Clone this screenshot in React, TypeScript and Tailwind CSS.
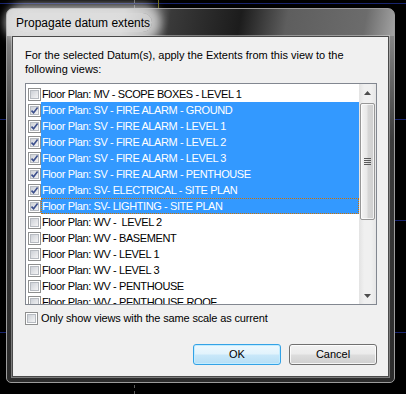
import React from "react";

type Row = { label: string; checked?: boolean; selected?: boolean; focus?: boolean };

const rows: Row[] = [
  { label: "Floor Plan: MV - SCOPE BOXES - LEVEL 1" },
  { label: "Floor Plan: SV - FIRE ALARM - GROUND", checked: true, selected: true },
  { label: "Floor Plan: SV - FIRE ALARM - LEVEL 1", checked: true, selected: true },
  { label: "Floor Plan: SV - FIRE ALARM - LEVEL 2", checked: true, selected: true },
  { label: "Floor Plan: SV - FIRE ALARM - LEVEL 3", checked: true, selected: true },
  { label: "Floor Plan: SV - FIRE ALARM - PENTHOUSE", checked: true, selected: true },
  { label: "Floor Plan: SV- ELECTRICAL - SITE PLAN", checked: true, selected: true },
  { label: "Floor Plan: SV- LIGHTING - SITE PLAN", checked: true, selected: true, focus: true },
  { label: "Floor Plan: WV -  LEVEL 2" },
  { label: "Floor Plan: WV - BASEMENT" },
  { label: "Floor Plan: WV - LEVEL 1" },
  { label: "Floor Plan: WV - LEVEL 3" },
  { label: "Floor Plan: WV - PENTHOUSE" },
  { label: "Floor Plan: WV - PENTHOUSE ROOF" },
];

function CheckBox({ checked }: { checked?: boolean }) {
  return (
    <div className="w-[13px] h-[13px] shrink-0 border border-[#8e8f8f] bg-white p-px">
      <div className="relative w-full h-full border border-[#b7bbc1] bg-[linear-gradient(135deg,#cdd1d7,#f4f4f5)]">
        {checked && (
          <svg viewBox="0 0 9 9" className="absolute -left-px -top-px w-[9px] h-[9px]">
            <path d="M1.5 4.6 L3.6 6.8 L7.6 1.6" fill="none" stroke="#3c4f8c" strokeWidth="1.6" />
          </svg>
        )}
      </div>
    </div>
  );
}

function Arrow({ down }: { down?: boolean }) {
  return (
    <div className="h-[17px] flex items-center justify-center">
      <svg viewBox="0 0 7 4" className="w-[7px] h-[4px]">
        <path d={down ? "M0 0 H7 L3.5 4 Z" : "M0 4 H7 L3.5 0 Z"} fill="#4d4d4d" />
      </svg>
    </div>
  );
}

export default function App() {
  return (
    <div className="relative w-[406px] h-[394px] overflow-hidden bg-black pl-[6px] pt-[8px] font-['Liberation_Sans',Arial,sans-serif] text-[11px] text-black">
      {/* cad drawing behind the dialog */}
      <div className="absolute left-0 right-0 top-[3px] h-px bg-[#18246e]" />
      <div className="absolute left-0 right-0 top-[119px] h-px bg-[#18246e]" />
      <div className="absolute left-[395px] right-0 top-[220px] h-px bg-[#18246e]" />
      <div className="absolute left-0 right-0 top-[332px] h-px bg-[#18246e]" />
      <div className="absolute left-[134px] top-0 h-[8px] border-l border-dashed border-[#5c5c5c]" />
      <div className="absolute left-[134px] top-[385px] h-[9px] border-l border-dashed border-[#5c5c5c]" />
      <div className="absolute left-[158px] top-0 h-[8px] w-px bg-[#6d6a1e]" />

      {/* window frame */}
      <div className="relative flex flex-col w-[389px] h-[375px] rounded-t-[7px] rounded-b-[5px] border border-[#9c9c9c] px-[5px] pb-[5px] bg-[linear-gradient(to_bottom,#9a9a9a_0px,#6c6c6c_60px,#3c3c3c_130px,#2c2c2c_100%)]">
        <div className="-mx-[5px] h-[27px] flex items-center pl-[7px] rounded-t-[6px] bg-[linear-gradient(100deg,#cfcfcf_0%,#c4c4c4_30%,#3a3a3a_42%,#1c1c1c_60%,#5e5e5e_72%,#6c6c6c_92%,#a2a2a2_100%)]">
          <span className="pt-px px-[2px] text-[12px] bg-[#e2e2e2]/80 rounded-full shadow-[0_0_10px_9px_rgba(226,226,226,0.75)]">
            Propagate datum extents
          </span>
        </div>

        {/* client area */}
        <div className="flex-1 flex flex-col border border-[#4a4a4a] bg-[#f0f0f0] pl-[12px] pr-[11px] pt-[11px] shadow-[0_0_0_1px_rgba(220,220,220,0.45)]">
          <p className="leading-[14px]">
            For the selected Datum(s), apply the Extents from this view to the
            <br />
            following views:
          </p>

          {/* list box */}
          <div className="mt-[7px] h-[222px] flex border border-[#828790] bg-white">
            <div className="flex-1 overflow-hidden pt-[2px] tracking-[-0.4px]">
              {rows.map((r) => (
                <div key={r.label} className="h-[16px] flex items-center">
                  <div className="ml-[2px]">
                    <CheckBox checked={r.checked} />
                  </div>
                  <div
                    className={
                      r.focus
                        ? "flex-1 h-[16px] leading-[14px] whitespace-pre bg-[#3399ff] text-white border border-dotted border-[#d07000]"
                        : r.selected
                        ? "flex-1 h-[16px] pl-px leading-[16px] whitespace-pre bg-[#3399ff] text-white"
                        : "flex-1 h-[16px] pl-px leading-[16px] whitespace-pre"
                    }
                  >
                    {r.label}
                  </div>
                </div>
              ))}
            </div>
            {/* scrollbar */}
            <div className="w-[17px] flex flex-col bg-[linear-gradient(to_right,#e3e3e3,#f0f0f0_30%,#f0f0f0_70%,#e6e6e6)]">
              <Arrow />
              <div className="mt-[2px] mx-px h-[117px] flex items-center justify-center rounded-[2px] border border-[#979797] bg-[linear-gradient(to_right,#f4f4f4,#e8e8e8_45%,#d6d6d6_55%,#cfcfcf)] shadow-[inset_0_0_0_1px_rgba(255,255,255,0.7)]">
                <div className="flex flex-col gap-px">
                  <div className="w-[7px] h-px bg-[#5a5a5a]" />
                  <div className="w-[7px] h-px bg-[#5a5a5a]" />
                  <div className="w-[7px] h-px bg-[#5a5a5a]" />
                  <div className="w-[7px] h-px bg-[#5a5a5a]" />
                </div>
              </div>
              <div className="flex-1" />
              <Arrow down />
            </div>
          </div>

          <div className="mt-[7px] flex items-center gap-[3px] h-[13px]">
            <CheckBox />
            <span className="tracking-[-0.15px]">Only show views with the same scale as current</span>
          </div>

          <div className="mt-[19px] flex justify-end gap-[8px]">
            <button className="w-[88px] h-[21px] rounded-[3px] border border-[#33a2e6] bg-[linear-gradient(to_bottom,#eef8fe,#e1f3fc_48%,#c9e8f9_52%,#b6def5)] shadow-[inset_0_0_0_1px_#c2ecff] text-[11px]">
              OK
            </button>
            <button className="w-[88px] h-[21px] rounded-[3px] border border-[#707070] bg-[linear-gradient(to_bottom,#f2f2f2,#ebebeb_48%,#dddddd_52%,#cfcfcf)] shadow-[inset_0_0_0_1px_rgba(255,255,255,0.8)] text-[11px]">
              Cancel
            </button>
          </div>
        </div>
      </div>
    </div>
  );
}
